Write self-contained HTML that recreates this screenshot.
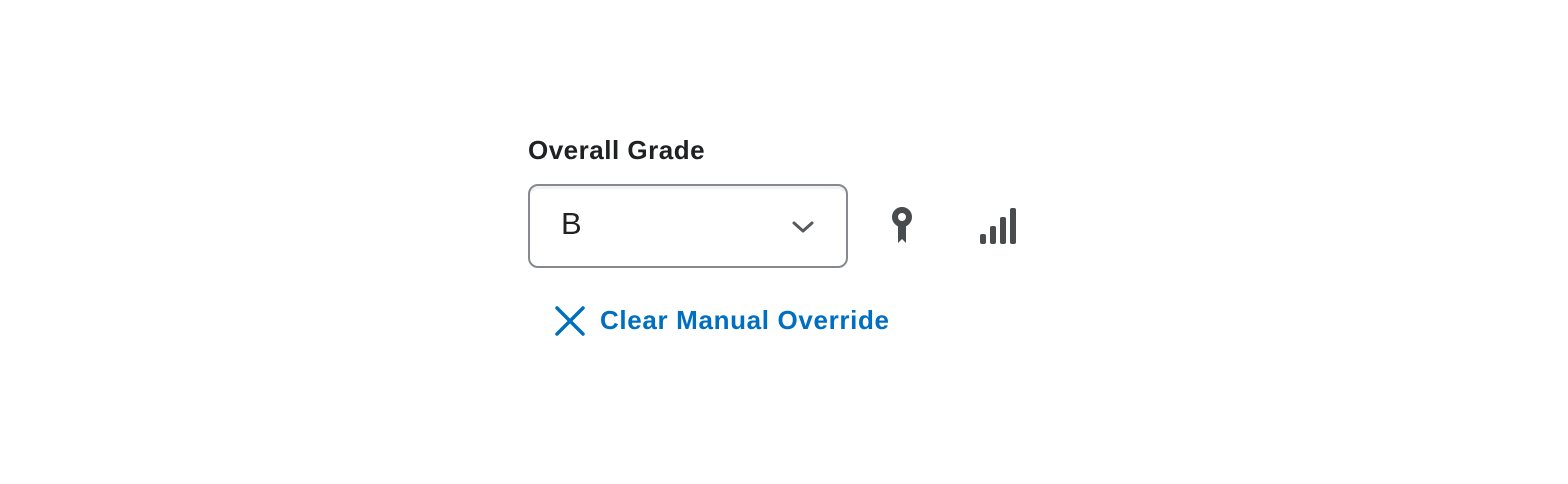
<!DOCTYPE html>
<html><head><style>
body{margin:0;width:1568px;height:484px;background:#fff;font-family:"Liberation Sans",sans-serif;position:relative}
.lbl{position:absolute;left:528px;top:135px;font-size:26px;font-weight:bold;color:#202122;letter-spacing:0.5px}
.sel{position:absolute;left:528px;top:184px;width:316px;height:80px;border:2px solid #868a8e;border-radius:10px;box-shadow:inset 0 3px 0 #f1f2f3}
.sel span{position:absolute;left:31px;top:20px;font-size:31px;color:#202122}
.clr{position:absolute;left:600px;top:305px;font-size:26px;font-weight:bold;color:#006fbf;letter-spacing:0.65px}
svg{position:absolute}
</style></head><body>
<div class="lbl">Overall Grade</div>
<div class="sel"><span>B</span></div>
<svg style="left:790px;top:219px" width="26" height="16" viewBox="0 0 26 16"><path d="M4 4 L13 12 L22 4" stroke="#565a5c" stroke-width="3" fill="none" stroke-linecap="round" stroke-linejoin="round"/></svg>
<svg style="left:890px;top:206px" width="24" height="40" viewBox="0 0 24 40"><circle cx="12" cy="11" r="7" fill="none" stroke="#494c4e" stroke-width="6"/><path d="M8 17 L8 37 L12 33 L16 37 L16 17 Z" fill="#494c4e"/></svg>
<svg style="left:978px;top:206px" width="42" height="40" viewBox="0 0 42 40"><g fill="#494c4e"><rect x="2" y="28" width="6" height="10" rx="2"/><rect x="12" y="20" width="6" height="18" rx="2"/><rect x="22" y="11" width="6" height="27" rx="2"/><rect x="32" y="2" width="6" height="36" rx="2"/></g></svg>
<svg style="left:554px;top:305px" width="32" height="32" viewBox="0 0 32 32"><path d="M3 3 L29 29 M29 3 L3 29" stroke="#006fbf" stroke-width="3.5" stroke-linecap="round"/></svg>
<div class="clr">Clear Manual Override</div>
</body></html>
